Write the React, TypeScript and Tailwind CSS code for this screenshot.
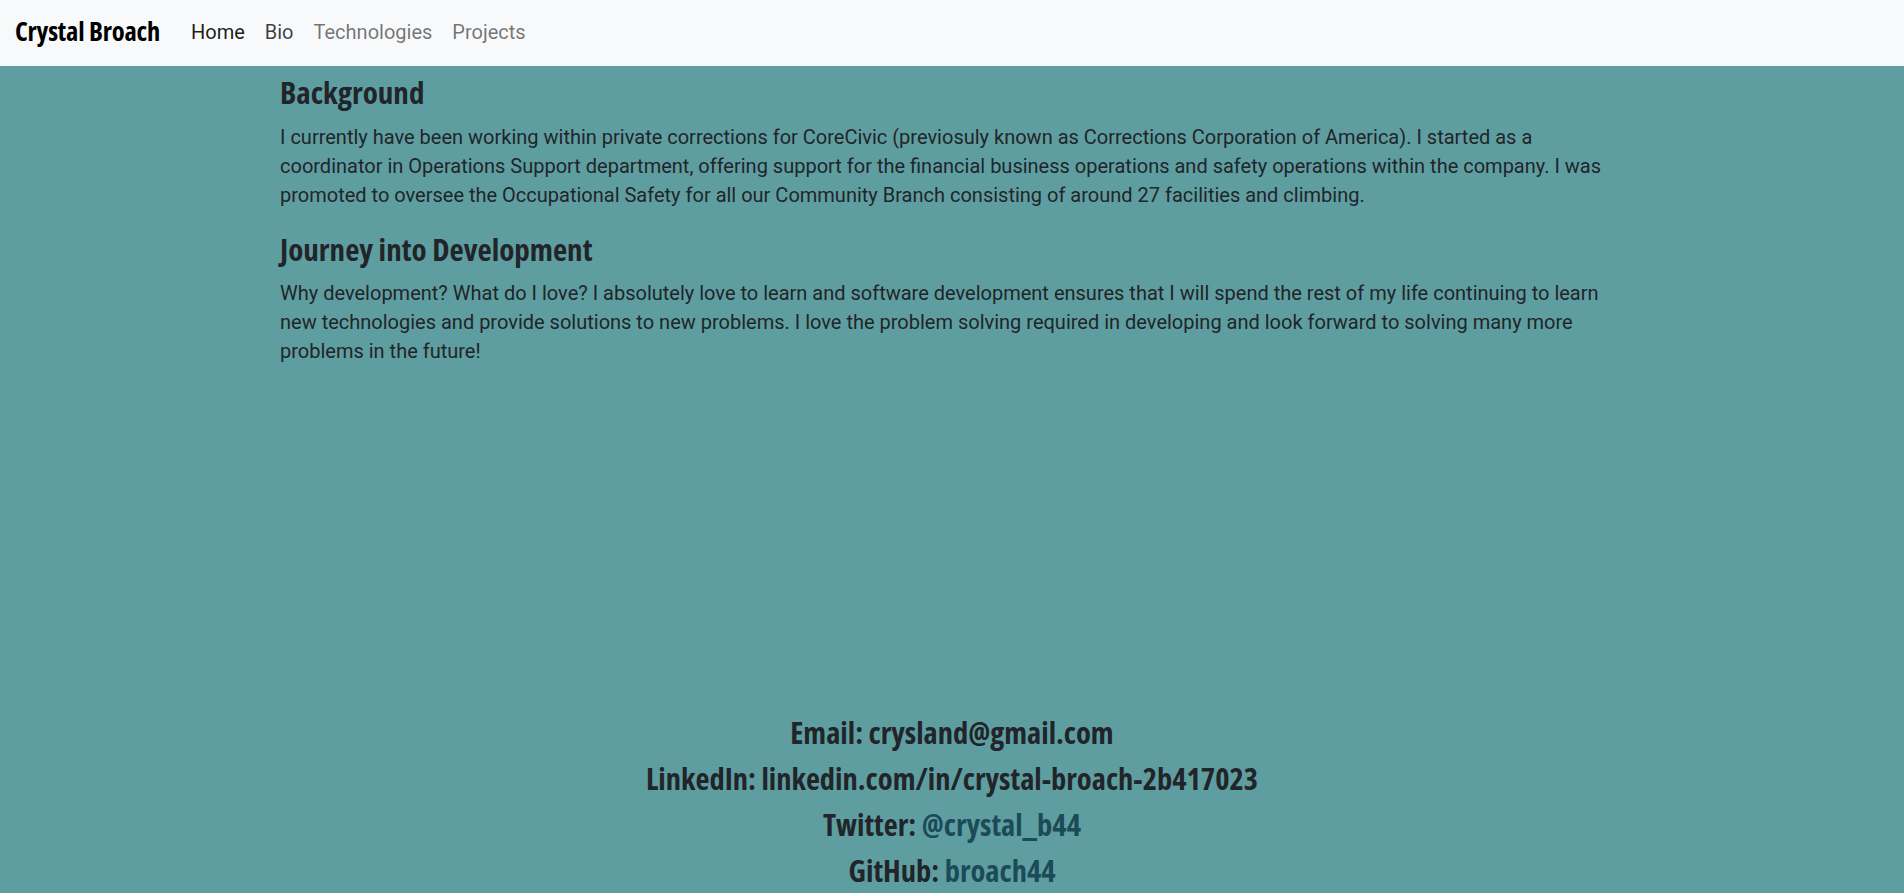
import React from "react";

const heading = "font-['Open_Sans',sans-serif] font-bold [font-stretch:75%]";

export default function App() {
  return (
    <div className="min-h-screen bg-[#5f9ea0] text-[#212529] font-['Roboto',sans-serif]">
      {/* Navbar */}
      <header className="bg-[#f8f9fa] h-[66px] px-[15px] pb-[3px] flex items-center">
        <div className={`${heading} text-[26.5px] text-black mr-[31px] tracking-[-0.2px]`}>Crystal Broach</div>
        <nav className="flex items-center gap-[20px] text-[20px]">
          <a className="text-black/90">Home</a>
          <a className="text-black/75">Bio</a>
          <a className="text-black/55">Technologies</a>
          <a className="text-black/55">Projects</a>
        </nav>
      </header>

      {/* Bio content */}
      <main className="mx-[280px] pt-[9px]">
        <h3 className={`${heading} text-[31px] leading-[34px] mb-[13.5px]`}>Background</h3>
        <p className="text-[20px] leading-[29px] mb-[22px]">
          I currently have been working within private corrections for CoreCivic (previosuly known as Corrections
          Corporation of America). I started as a coordinator in Operations Support department, offering support for
          the financial business operations and safety operations within the company. I was promoted to oversee the
          Occupational Safety for all our Community Branch consisting of around 27 facilities and climbing.
        </p>
        <h3 className={`${heading} text-[31px] leading-[34px] mb-[13.5px]`}>Journey into Development</h3>
        <p className="text-[20px] leading-[29px]">
          Why development? What do I love? I absolutely love to learn and software development ensures that I will spend
          the rest of my life continuing to learn new technologies and provide solutions to new problems. I love the
          problem solving required in developing and look forward to solving many more problems in the future!
        </p>
      </main>

      {/* Contact */}
      <footer className={`${heading} text-center text-[30.5px] leading-[46px] mt-[343px]`}>
        <div>Email: crysland@gmail.com</div>
        <div>LinkedIn: linkedin.com/in/crystal-broach-2b417023</div>
        <div>
          Twitter: <a className="text-[#1b4a58]">@crystal_b44</a>
        </div>
        <div>
          GitHub: <a className="text-[#1b4a58]">broach44</a>
        </div>
      </footer>
    </div>
  );
}
